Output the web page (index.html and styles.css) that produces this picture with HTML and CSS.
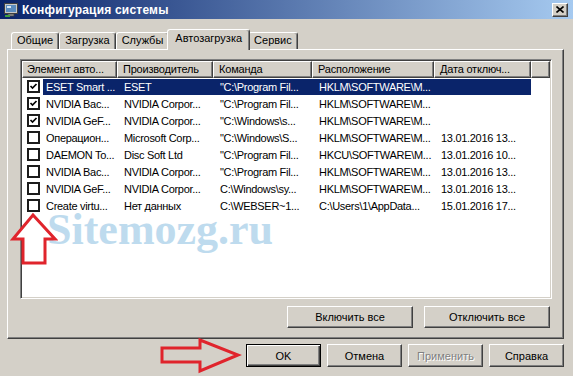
FILE: index.html
```html
<!DOCTYPE html>
<html lang="ru">
<head>
    <meta charset="UTF-8">
    <title>Конфигурация системы</title>
    <link rel="stylesheet" href="styles.css">
</head>
<body>

<div class="window">
    <div class="titlebar">
        <svg class="title-icon" width="16" height="16" viewBox="0 0 16 16">
            <rect x="1.5" y="1.5" width="13" height="10" fill="#c8c8c8" stroke="#404040"/>
            <rect x="3" y="3" width="10" height="7" fill="#5a8cc0"/>
            <rect x="4" y="4" width="4" height="2" fill="#d8e8f8"/>
            <rect x="5" y="12" width="6" height="2" fill="#a0a0a0" stroke="#404040" stroke-width="0.8"/>
            <rect x="2" y="13" width="5" height="2" fill="#40a040"/>
        </svg>
        <span class="title-text">Конфигурация системы</span>
        <div class="close-btn">
            <svg width="8" height="7" viewBox="0 0 8 7">
                <path d="M0.5 0.5 L7.5 6.5 M7.5 0.5 L0.5 6.5" stroke="#000" stroke-width="1.6"/>
            </svg>
        </div>
    </div>

    <div class="tabs">
        <div class="tab">Общие</div>
        <div class="tab">Загрузка</div>
        <div class="tab">Службы</div>
        <div class="tab active">Автозагрузка</div>
        <div class="tab">Сервис</div>
    </div>

    <div class="panel">
        <div class="list">
            <div class="list-head">
                <div class="th c0">Элемент авто...</div>
                <div class="th c2">Производитель</div>
                <div class="th c3">Команда</div>
                <div class="th c4">Расположение</div>
                <div class="th c5">Дата отключ...</div>
                <div class="th c6"></div>
            </div>

            <div class="row selected">
                <div class="check-cell"><span class="check"><svg width="9" height="9" viewBox="0 0 9 9"><polyline points="1.5,4 3.5,6 7.5,2" fill="none" stroke="#000" stroke-width="1.7"/></svg></span></div>
                <div class="td c1">ESET Smart ...</div>
                <div class="td c2">ESET</div>
                <div class="td c3">"C:\Program Fil...</div>
                <div class="td c4">HKLM\SOFTWARE\M...</div>
                <div class="td c5"></div>
            </div>
            <div class="row">
                <div class="check-cell"><span class="check"><svg width="9" height="9" viewBox="0 0 9 9"><polyline points="1.5,4 3.5,6 7.5,2" fill="none" stroke="#000" stroke-width="1.7"/></svg></span></div>
                <div class="td c1">NVIDIA Bac...</div>
                <div class="td c2">NVIDIA Corpor...</div>
                <div class="td c3">"C:\Program Fil...</div>
                <div class="td c4">HKLM\SOFTWARE\M...</div>
                <div class="td c5"></div>
            </div>
            <div class="row">
                <div class="check-cell"><span class="check"><svg width="9" height="9" viewBox="0 0 9 9"><polyline points="1.5,4 3.5,6 7.5,2" fill="none" stroke="#000" stroke-width="1.7"/></svg></span></div>
                <div class="td c1">NVIDIA GeF...</div>
                <div class="td c2">NVIDIA Corpor...</div>
                <div class="td c3">"C:\Windows\s...</div>
                <div class="td c4">HKLM\SOFTWARE\M...</div>
                <div class="td c5"></div>
            </div>
            <div class="row">
                <div class="check-cell"><span class="check"></span></div>
                <div class="td c1">Операцион...</div>
                <div class="td c2">Microsoft Corp...</div>
                <div class="td c3">"C:\Windows\S...</div>
                <div class="td c4">HKLM\SOFTWARE\M...</div>
                <div class="td c5">13.01.2016 13...</div>
            </div>
            <div class="row">
                <div class="check-cell"><span class="check"></span></div>
                <div class="td c1">DAEMON To...</div>
                <div class="td c2">Disc Soft Ltd</div>
                <div class="td c3">"C:\Program Fil...</div>
                <div class="td c4">HKCU\SOFTWARE\M...</div>
                <div class="td c5">13.01.2016 10...</div>
            </div>
            <div class="row">
                <div class="check-cell"><span class="check"></span></div>
                <div class="td c1">NVIDIA Bac...</div>
                <div class="td c2">NVIDIA Corpor...</div>
                <div class="td c3">"C:\Program Fil...</div>
                <div class="td c4">HKLM\SOFTWARE\M...</div>
                <div class="td c5">13.01.2016 13...</div>
            </div>
            <div class="row">
                <div class="check-cell"><span class="check"></span></div>
                <div class="td c1">NVIDIA GeF...</div>
                <div class="td c2">NVIDIA Corpor...</div>
                <div class="td c3">C:\Windows\sy...</div>
                <div class="td c4">HKLM\SOFTWARE\M...</div>
                <div class="td c5">13.01.2016 13...</div>
            </div>
            <div class="row">
                <div class="check-cell"><span class="check"></span></div>
                <div class="td c1">Create virtu...</div>
                <div class="td c2">Нет данных</div>
                <div class="td c3">C:\WEBSER~1...</div>
                <div class="td c4">C:\Users\1\AppData...</div>
                <div class="td c5">15.01.2016 17...</div>
            </div>
        </div>

        <div class="panel-actions">
            <button class="btn wide">Включить все</button>
            <button class="btn wide">Отключить все</button>
        </div>
    </div>

    <div class="dialog-actions">
        <button class="btn default">OK</button>
        <button class="btn">Отмена</button>
        <button class="btn" disabled>Применить</button>
        <button class="btn">Справка</button>
    </div>

    <div class="watermark">Sitemozg.ru</div>

    <svg class="arrow-up" width="48" height="56" viewBox="0 0 48 56">
        <polygon points="23,3 45,27 35,27 35,51 13,51 13,27 3,27" fill="#fff" stroke="#e0242c" stroke-width="3" stroke-linejoin="miter"/>
    </svg>
    <svg class="arrow-right" width="84" height="38" viewBox="0 0 84 38">
        <polygon points="4,11 42,11 42,3 80,18 42,34 42,25 4,25" fill="none" stroke="#e0242c" stroke-width="3" stroke-linejoin="miter"/>
    </svg>
</div>

</body>
</html>
```

FILE: styles.css
```css
* {
    margin: 0;
    padding: 0;
    box-sizing: border-box;
}
body {
    width: 573px;
    height: 376px;
    overflow: hidden;
    background-color: #d4d0c8;
    font-family: "Liberation Sans", Arial, sans-serif;
    font-size: 11px;
    color: #000;
}
.window {
    position: relative;
    width: 573px;
    height: 376px;
}
.titlebar {
    display: flex;
    align-items: center;
    height: 19px;
    padding: 0 5px 0 3px;
    background: linear-gradient(to right, #0a246a, #a6caf0);
}
.title-icon {
    margin-right: 3px;
}
.title-text {
    color: #fff;
    font-weight: bold;
    font-size: 12px;
    letter-spacing: 0.2px;
}
.close-btn {
    display: flex;
    align-items: center;
    justify-content: center;
    margin-left: auto;
    width: 16px;
    height: 14px;
    background-color: #d4d0c8;
    border: 1px solid;
    border-color: #fff #404040 #404040 #fff;
    box-shadow: inset -1px -1px #808080;
}

/* tabs */
.tabs {
    display: flex;
    align-items: flex-end;
    height: 30px;
    padding-left: 11px;
}
.tab {
    height: 17px;
    padding: 0 5px;
    line-height: 15px;
    border: 1px solid;
    border-bottom: none;
    border-color: #fff #404040 #fff #fff;
    border-radius: 3px 3px 0 0;
    box-shadow: inset -1px 0 #808080;
    background-color: #d4d0c8;
}
.tab.active {
    position: relative;
    z-index: 1;
    height: 21px;
    margin: 0 -2px -1px;
    padding: 0 7px;
    line-height: 17px;
}
.panel {
    width: 557px;
    height: 290px;
    margin-left: 7px;
    padding: 9px 0 0 12px;
    border: 1px solid;
    border-color: #fff #404040 #404040 #fff;
    box-shadow: inset -1px -1px #808080;
}

/* list view */
.list {
    width: 532px;
    height: 240px;
    background-color: #fff;
    border: 1px solid;
    border-color: #808080 #fff #fff #808080;
    box-shadow: inset 1px 1px #404040, inset -1px -1px #d4d0c8;
    padding: 1px;
    overflow: hidden;
}
.list-head {
    display: flex;
    height: 17px;
}
.th {
    height: 17px;
    padding-left: 5px;
    line-height: 15px;
    white-space: nowrap;
    overflow: hidden;
    letter-spacing: -0.2px;
    background-color: #d4d0c8;
    border: 1px solid;
    border-color: #fff #404040 #404040 #fff;
    box-shadow: inset -1px -1px #808080;
}
.c0 { width: 95px; padding-left: 4px; }
.c1 { width: 74px; }
.c2 { width: 96px; }
.c3 { width: 99px; }
.c4 { width: 122px; }
.c5 { width: 97px; }
.c6 { flex: 1; }
.row {
    display: flex;
    height: 17px;
    align-items: center;
}
.check-cell {
    width: 21px;
    padding-left: 5px;
    display: flex;
    align-items: center;
}
.check {
    display: flex;
    width: 13px;
    height: 13px;
    border: 2px solid #1c1c1c;
    background-color: #fff;
}
.td {
    height: 16px;
    line-height: 16px;
    padding-left: 7px;
    white-space: nowrap;
    overflow: hidden;
    letter-spacing: -0.3px;
}
.td.c1 {
    padding-left: 3px;
}
.row.selected .td {
    background-color: #0a246a;
    color: #fff;
}

/* buttons */
.btn {
    font-family: "Liberation Sans", Arial, sans-serif;
    font-size: 11px;
    font-weight: normal;
    color: #000;
    width: 75px;
    height: 23px;
    background-color: #d4d0c8;
    border: 1px solid;
    border-color: #fff #404040 #404040 #fff;
    box-shadow: inset -1px -1px #808080;
}
.btn.wide {
    width: 126px;
    height: 22px;
}
.btn.default {
    border-color: #000;
    box-shadow: inset 1px 1px #fff, inset -1px -1px #404040, inset -2px -2px #808080;
}
.btn:disabled {
    color: #808080;
    text-shadow: 1px 1px #fff;
}
.panel-actions {
    display: flex;
    justify-content: flex-end;
    gap: 11px;
    width: 530px;
    margin-top: 7px;
}
.dialog-actions {
    display: flex;
    justify-content: flex-end;
    gap: 6px;
    margin-top: 5px;
    padding-right: 9px;
}

/* overlays */
.watermark {
    position: absolute;
    left: 47px;
    top: 213px;
    font-family: "Liberation Serif", serif;
    font-weight: bold;
    font-size: 44px;
    line-height: 34px;
    color: #bedbee;
}
.arrow-up {
    position: absolute;
    left: 10px;
    top: 212px;
}
.arrow-right {
    position: absolute;
    left: 158px;
    top: 337px;
}
```
